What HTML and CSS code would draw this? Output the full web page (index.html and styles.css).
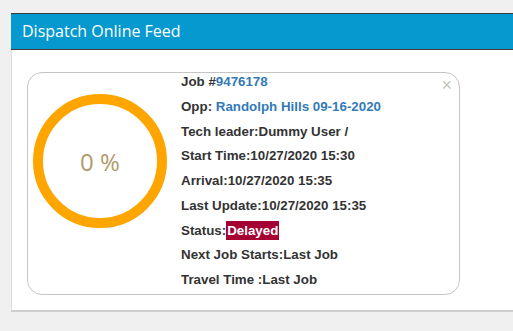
FILE: index.html
```html
<!DOCTYPE html>
<html lang="en">
  <head>
    <meta charset="UTF-8" />
    <meta name="viewport" content="width=device-width, initial-scale=1.0" />
    <title>Dispatch Online Feed</title>
    <link rel="stylesheet" href="styles.css">
  </head>
  <body>
    <div class="panel">
      <div class="panel-heading">Dispatch Online Feed</div>
      <div class="panel-body">
        <!-- job card -->
        <div class="feed-card">
          <span class="close">&times;</span>
          <div class="progress-ring">
            <span>0 %</span>
          </div>
          <ul class="job-info">
            <li>Job #<a href="#">9476178</a></li>
            <li>Opp: <a href="#">Randolph Hills 09-16-2020</a></li>
            <li>Tech leader:Dummy User /</li>
            <li>Start Time:10/27/2020 15:30</li>
            <li>Arrival:10/27/2020 15:35</li>
            <li>Last Update:10/27/2020 15:35</li>
            <li>Status:<span class="status-delayed">Delayed</span></li>
            <li>Next Job Starts:Last Job</li>
            <li>Travel Time :Last Job</li>
          </ul>
        </div>
      </div>
    </div>
  </body>
</html>
```

FILE: styles.css
```css
body {
  margin: 0;
  padding: 13px 0 0 11px;
  background: #f0f0f0;
  font-family: Arial, "Liberation Sans", sans-serif;
  overflow: hidden;
}

.panel {
  width: 502px;
  background: #fff;
  border-left: 1px solid #ddd;
  border-bottom: 2px solid #cfcfcf;
}

.panel-heading {
  height: 37px;
  box-sizing: border-box;
  padding: 0 11px;
  line-height: 35px;
  background: #0599d0;
  border-top: 1px solid #3a3a3a;
  border-bottom: 1px solid #3a3a3a;
  margin-left: -1px;
  color: #fff;
  font-family: "Open Sans", sans-serif;
  font-size: 16px;
}

.panel-body {
  padding: 22px 0 15px 15px;
}

.feed-card {
  position: relative;
  width: 433px;
  height: 223px;
  box-sizing: border-box;
  border: 1px solid #c4c4c4;
  border-radius: 15px;
  display: flex;
  align-items: flex-start;
  padding: 0 0 0 5px;
}

.close {
  position: absolute;
  top: 3px;
  right: 7px;
  font-size: 18px;
  line-height: 1;
  color: #c4c4c4;
}

.progress-ring {
  width: 134px;
  height: 134px;
  box-sizing: border-box;
  border: 10px solid #ffa500;
  border-radius: 50%;
  margin-top: 21px;
  display: flex;
  align-items: center;
  justify-content: center;
  flex-shrink: 0;
}

.progress-ring span {
  font-family: "Open Sans", sans-serif;
  font-size: 24px;
  color: #b09a6b;
}

.job-info {
  list-style: none;
  margin: -3px 0 0 14px;
  padding: 0;
  font-size: 10pt;
  font-weight: bold;
  color: #333;
}

.job-info li {
  line-height: 24.75px;
}

.job-info a {
  color: #337ab7;
  text-decoration: none;
}

.status-delayed {
  background: #a50034;
  color: #fff;
  padding: 2px 1px;
}
```
